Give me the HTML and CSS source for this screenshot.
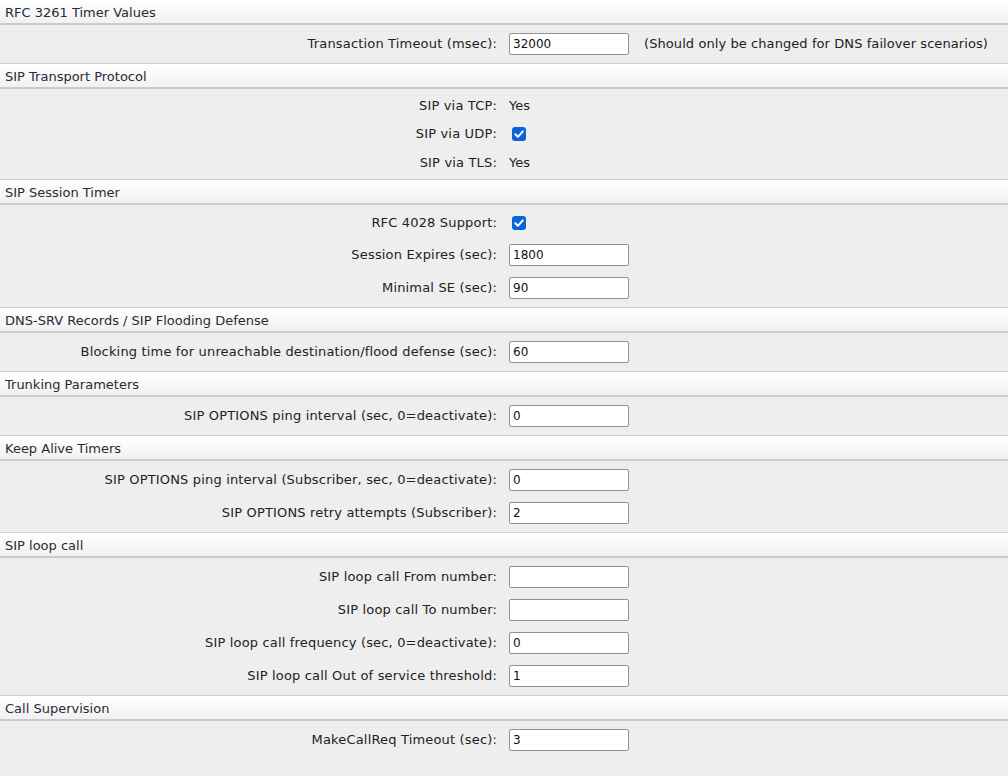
FILE: index.html
```html
<!DOCTYPE html>
<html>
<head>
<meta charset="utf-8">
<link rel="stylesheet" href="styles.css">
</head>
<body>
<div class="page">
  <section class="sec">
    <div class="head">RFC 3261 Timer Values</div>
    <div class="body">
      <div class="row inrow"><div class="lbl">Transaction Timeout (msec):</div><div class="val"><input class="txt" type="text" value="32000"><span class="note">(Should only be changed for DNS failover scenarios)</span></div></div>
    </div>
  </section>
  <section class="sec">
    <div class="head">SIP Transport Protocol</div>
    <div class="body">
      <div class="row textrow"><div class="lbl">SIP via TCP:</div><div class="val">Yes</div></div>
      <div class="row checkrow"><div class="lbl">SIP via UDP:</div><div class="val"><span class="chk"><svg viewBox="0 0 14 14" width="14" height="14"><path d="M3.3 7.3 L5.9 9.8 L10.8 4.4" fill="none" stroke="#fff" stroke-width="2" stroke-linecap="round" stroke-linejoin="round"/></svg></span></div></div>
      <div class="row textrow"><div class="lbl">SIP via TLS:</div><div class="val">Yes</div></div>
    </div>
  </section>
  <section class="sec">
    <div class="head">SIP Session Timer</div>
    <div class="body">
      <div class="row checkrow tall"><div class="lbl">RFC 4028 Support:</div><div class="val"><span class="chk"><svg viewBox="0 0 14 14" width="14" height="14"><path d="M3.3 7.3 L5.9 9.8 L10.8 4.4" fill="none" stroke="#fff" stroke-width="2" stroke-linecap="round" stroke-linejoin="round"/></svg></span></div></div>
      <div class="row inrow"><div class="lbl">Session Expires (sec):</div><div class="val"><input class="txt" type="text" value="1800"></div></div>
      <div class="row inrow"><div class="lbl">Minimal SE (sec):</div><div class="val"><input class="txt" type="text" value="90"></div></div>
    </div>
  </section>
  <section class="sec">
    <div class="head">DNS-SRV Records / SIP Flooding Defense</div>
    <div class="body">
      <div class="row inrow"><div class="lbl">Blocking time for unreachable destination/flood defense (sec):</div><div class="val"><input class="txt" type="text" value="60"></div></div>
    </div>
  </section>
  <section class="sec">
    <div class="head">Trunking Parameters</div>
    <div class="body">
      <div class="row inrow"><div class="lbl">SIP OPTIONS ping interval (sec, 0=deactivate):</div><div class="val"><input class="txt" type="text" value="0"></div></div>
    </div>
  </section>
  <section class="sec">
    <div class="head">Keep Alive Timers</div>
    <div class="body">
      <div class="row inrow"><div class="lbl">SIP OPTIONS ping interval (Subscriber, sec, 0=deactivate):</div><div class="val"><input class="txt" type="text" value="0"></div></div>
      <div class="row inrow"><div class="lbl">SIP OPTIONS retry attempts (Subscriber):</div><div class="val"><input class="txt" type="text" value="2"></div></div>
    </div>
  </section>
  <section class="sec">
    <div class="head">SIP loop call</div>
    <div class="body">
      <div class="row inrow"><div class="lbl">SIP loop call From number:</div><div class="val"><input class="txt" type="text" value=""></div></div>
      <div class="row inrow"><div class="lbl">SIP loop call To number:</div><div class="val"><input class="txt" type="text" value=""></div></div>
      <div class="row inrow"><div class="lbl">SIP loop call frequency (sec, 0=deactivate):</div><div class="val"><input class="txt" type="text" value="0"></div></div>
      <div class="row inrow"><div class="lbl">SIP loop call Out of service threshold:</div><div class="val"><input class="txt" type="text" value="1"></div></div>
    </div>
  </section>
  <section class="sec">
    <div class="head">Call Supervision</div>
    <div class="body">
      <div class="row inrow"><div class="lbl">MakeCallReq Timeout (sec):</div><div class="val"><input class="txt" type="text" value="3"></div></div>
    </div>
  </section>
</div>
</body>
</html>
```
FILE: styles.css
```css
html {
  background: #eeeeee;
}
body {
  margin: 0;
  font-family: "DejaVu Sans", Verdana, sans-serif;
  font-size: 13px;
  color: #222222;
}
.head {
  height: 23px;
  line-height: 25px;
  padding-left: 5px;
  border-top: 1px solid #cfcfcf;
  border-bottom: 2px solid #cbcbcb;
  background: linear-gradient(#ffffff, #f1f1f1);
  color: #2a2a35;
  overflow: hidden;
}
.sec:first-child .head {
  border-top: none;
}
.body {
  padding: 2px 0 3px;
  background: #eeeeee;
}
.row {
  display: grid;
  grid-template-columns: 504px 1fr;
  align-items: center;
}
.textrow {
  height: 28px;
}
.checkrow {
  height: 29px;
}
.checkrow.tall {
  height: 31px;
}
.inrow {
  height: 33px;
}
.lbl {
  text-align: right;
  padding-right: 7px;
  white-space: nowrap;
  letter-spacing: 0.17px;
}
.val {
  padding-left: 5px;
  display: flex;
  align-items: center;
}
.txt {
  box-sizing: border-box;
  width: 120px;
  height: 22px;
  margin: 0;
  padding: 0 3px;
  border: 1px solid #8f8f9d;
  border-radius: 2px;
  background: #ffffff;
  font-family: "DejaVu Sans", Verdana, sans-serif;
  font-size: 12px;
  color: #111111;
  outline: none;
}
.note {
  margin-left: 15px;
  white-space: nowrap;
  letter-spacing: 0.08px;
}
.chk {
  display: inline-flex;
  width: 14px;
  height: 14px;
  margin-left: 3px;
  border-radius: 3px;
  background: #0b63dc;
}
.chk svg {
  display: block;
}
```
